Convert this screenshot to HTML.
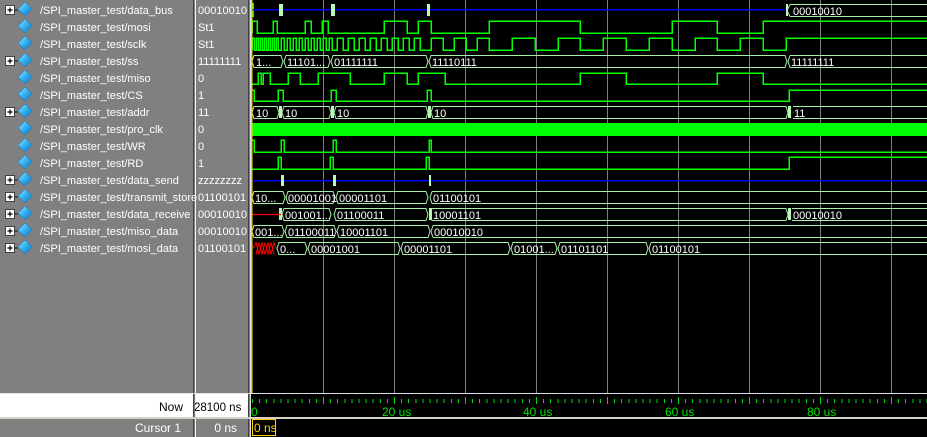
<!DOCTYPE html>
<html><head><meta charset="utf-8"><style>
html,body{margin:0;padding:0;width:927px;height:437px;overflow:hidden;background:#808080;font-family:"Liberation Sans",sans-serif;}
svg{position:absolute;left:0;top:0}
</style></head><body>
<svg width="927" height="437" viewBox="0 0 927 437" xmlns="http://www.w3.org/2000/svg" font-family="Liberation Sans, sans-serif">
<defs>
<linearGradient id="dg" x1="0" y1="0" x2="1" y2="1"><stop offset="0" stop-color="#a8e8ff"/><stop offset="0.5" stop-color="#30b0f0"/><stop offset="1" stop-color="#1070c0"/></linearGradient>
<g id="dia"><polygon points="25,0 32,7 25,14 18,7" fill="url(#dg)" stroke="#2080c0" stroke-width="0.6"/></g>
<g id="plus"><rect x="5.5" y="3.5" width="9" height="9" fill="#fff" stroke="#404040"/><path d="M7.5 8H12.5M10 5.5V10.5" stroke="#000" stroke-width="1.2"/><path d="M14 8H18" stroke="#202020"/></g>
</defs>
<rect x="0" y="0" width="927" height="437" fill="#808080"/>
<rect x="193" y="0" width="1" height="437" fill="#404040"/>
<rect x="195" y="0" width="1" height="437" fill="#f0f0f0"/>
<rect x="248" y="0" width="1" height="437" fill="#404040"/>
<rect x="250" y="0" width="1" height="437" fill="#e0e0e0"/>
<rect x="251" y="0" width="676" height="437" fill="#000"/>
<g fill="#fff" font-size="11">
<g transform="translate(0,2)"><use href="#plus"/><use href="#dia"/></g><text x="40" y="14">/SPI_master_test/data_bus</text><text x="198" y="14">00010010</text>
<g transform="translate(0,19)"><use href="#dia"/></g><text x="40" y="31">/SPI_master_test/mosi</text><text x="198" y="31">St1</text>
<g transform="translate(0,36)"><use href="#dia"/></g><text x="40" y="48">/SPI_master_test/sclk</text><text x="198" y="48">St1</text>
<g transform="translate(0,53)"><use href="#plus"/><use href="#dia"/></g><text x="40" y="65">/SPI_master_test/ss</text><text x="198" y="65">11111111</text>
<g transform="translate(0,70)"><use href="#dia"/></g><text x="40" y="82">/SPI_master_test/miso</text><text x="198" y="82">0</text>
<g transform="translate(0,87)"><use href="#dia"/></g><text x="40" y="99">/SPI_master_test/CS</text><text x="198" y="99">1</text>
<g transform="translate(0,104)"><use href="#plus"/><use href="#dia"/></g><text x="40" y="116">/SPI_master_test/addr</text><text x="198" y="116">11</text>
<g transform="translate(0,121)"><use href="#dia"/></g><text x="40" y="133">/SPI_master_test/pro_clk</text><text x="198" y="133">0</text>
<g transform="translate(0,138)"><use href="#dia"/></g><text x="40" y="150">/SPI_master_test/WR</text><text x="198" y="150">0</text>
<g transform="translate(0,155)"><use href="#dia"/></g><text x="40" y="167">/SPI_master_test/RD</text><text x="198" y="167">1</text>
<g transform="translate(0,172)"><use href="#plus"/><use href="#dia"/></g><text x="40" y="184">/SPI_master_test/data_send</text><text x="198" y="184">zzzzzzzz</text>
<g transform="translate(0,189)"><use href="#plus"/><use href="#dia"/></g><text x="40" y="201">/SPI_master_test/transmit_store</text><text x="198" y="201">01100101</text>
<g transform="translate(0,206)"><use href="#plus"/><use href="#dia"/></g><text x="40" y="218">/SPI_master_test/data_receive</text><text x="198" y="218">00010010</text>
<g transform="translate(0,223)"><use href="#plus"/><use href="#dia"/></g><text x="40" y="235">/SPI_master_test/miso_data</text><text x="198" y="235">00010010</text>
<g transform="translate(0,240)"><use href="#plus"/><use href="#dia"/></g><text x="40" y="252">/SPI_master_test/mosi_data</text><text x="198" y="252">01100101</text>
</g>
<g stroke="#808080" stroke-width="1">
<path d="M323.5 0V393M394.5 0V393M465.5 0V393M536.5 0V393M607.5 0V393M678.5 0V393M749.5 0V393M820.5 0V393M891.5 0V393"/>
</g>
<g fill="none" stroke="#00ff00" stroke-width="1.5" shape-rendering="crispEdges">
<path d="M252 33V21H257V33H273V21H277V33H305V21H311V33H322V21H328V33H384V21H407V33H418V21H431V33H489V21H580V33H672V21H717V33H763V21H927"/>
<path d="M252 50V38H254V50H256V38H258V50H260V38H262V50H264V38H266V50H268V38H270V50H272V38H274V50H276V38H278V50H281V38H284V50H287V38H290V50H293V38H296V50H299V38H302V50H305V38H308V50H311V38H314V50H317V38H320V50H323V38H326V50H329V38H332V50H337V38H343V50H348V38H354V50H359V38H365V50H370V38H376V50H381V38H387V50H392V38H398V50H403V38H409V50H414V38H420V50H431V38H443V50H454V38H466V50H477V38H489V50H512V38H535V50H558V38H580V50H603V38H626V50H649V38H672V50H695V38H717V50H740V38H763V50H786V38H927"/>
<path d="M252 84H258V73H261V84H263V73H270V84H288V73H300V84H318V73H350V84H384V73H407V84H418V73H445V84H580V73H626V84H717V73H763V84H927"/>
<path d="M252 90H254V101H278V90H283V101H331V90H336V101H427V90H431V101H789V90H927"/>
<path d="M252 140H254V152H281V140H284V152H333V140H336V152H429V140H431V152H927"/>
<path d="M252 169H278V157H281V169H330V157H333V169H426V157H429V169H789V157H927"/>
</g>
<rect x="252" y="123" width="675" height="13" fill="#00ff00"/>
<rect x="252" y="3" width="2" height="14" fill="#00ff00"/>
<path d="M252 9.5H787M252 180.5H927" stroke="#0000ff" stroke-width="1.5" shape-rendering="crispEdges"/>
<g fill="#b8f8b8">
<rect x="279" y="4" width="4" height="12"/><rect x="331" y="4" width="4" height="12"/><rect x="427" y="4" width="3" height="12"/><rect x="786" y="4" width="2" height="12"/>
<rect x="281" y="175" width="3" height="11"/><rect x="333" y="175" width="3" height="11"/><rect x="429" y="175" width="2" height="11"/>
<rect x="279" y="106" width="3" height="12"/><rect x="331" y="106" width="3" height="12"/><rect x="428" y="106" width="3" height="12"/><rect x="788" y="106" width="3" height="12"/>
<rect x="429" y="208" width="3" height="12"/><rect x="788" y="208" width="3" height="12"/><rect x="279" y="208" width="3" height="12"/>
</g>
<g fill="none" stroke="#a8f0a8" stroke-width="1">
<path d="M790 4.5H927M790 16.5H927M787 10.5L790 4.5M787 10.5L790 16.5"/>
<path d="M254 55.5H281L283 61.5L281 67.5H254L252 61.5Z M286 55.5H328L330 61.5L328 67.5H286L284 61.5Z M333 55.5H426L428 61.5L426 67.5H333L331 61.5Z M431 55.5H785L787 61.5L785 67.5H431L429 61.5Z M790 55.5H930M790 67.5H930M788 61.5L790 55.5M788 61.5L790 67.5"/>
<path d="M254 106.5H277L279 112.5L277 118.5H254L252 112.5Z M284 106.5H329L331 112.5L329 118.5H284L282 112.5Z M336 106.5H426L428 112.5L426 118.5H336L334 112.5Z M433 106.5H786L788 112.5L786 118.5H433L431 112.5Z M793 106.5H930M793 118.5H930"/>
<path d="M254 191.5H283L285 197.5L283 203.5H254L252 197.5Z M288 191.5H333L335 197.5L333 203.5H288L286 197.5Z M338 191.5H426L428 197.5L426 203.5H338L336 197.5Z M432 191.5H930M432 203.5H930M430 197.5L432 191.5M430 197.5L432 203.5"/>
<path d="M284 208.5H329L331 214.5L329 220.5H284L282 214.5Z M336 208.5H426L428 214.5L426 220.5H336L334 214.5Z M432 208.5H786L788 214.5L786 220.5H432L430 214.5Z M792 208.5H930M792 220.5H930"/>
<path d="M254 225.5H282L284 231.5L282 237.5H254L252 231.5Z M287 225.5H334L336 231.5L334 237.5H287L285 231.5Z M339 225.5H428L430 231.5L428 237.5H339L337 231.5Z M433 225.5H930M433 237.5H930M431 231.5L433 225.5M431 231.5L433 237.5"/>
<path d="M279 242.5H305L307 248.5L305 254.5H279L277 248.5Z M310 242.5H398L400 248.5L398 254.5H310L308 248.5Z M403 242.5H508L510 248.5L508 254.5H403L401 248.5Z M513 242.5H555L557 248.5L555 254.5H513L511 248.5Z M560 242.5H646L648 248.5L646 254.5H560L558 248.5Z M651 242.5H930M651 254.5H930M649 248.5L651 242.5M649 248.5L651 254.5"/>
</g>
<path d="M252 214.5H281" stroke="#ff0000" stroke-width="1.2"/>
<path d="M253 248.5L256 242.5L259 254.5L262 242.5L265 254.5L268 242.5L271 254.5L274 242.5L276 248.5M256 254.5L259 242.5L262 254.5L265 242.5L268 254.5L271 242.5L274 254.5" fill="none" stroke="#ff0000" stroke-width="1"/>
<g fill="#ffffff" font-size="11">
<text x="793" y="15">00010010</text>
<text x="256" y="66">1...</text><text x="287" y="66">11101...</text><text x="334" y="66">01111111</text><text x="432" y="66">11110111</text><text x="791" y="66">11111111</text>
<text x="256" y="117">10</text><text x="285" y="117">10</text><text x="337" y="117">10</text><text x="434" y="117">10</text><text x="794" y="117">11</text>
<text x="255" y="202">10...</text><text x="288" y="202">00001001</text><text x="339" y="202">00001101</text><text x="433" y="202">01100101</text>
<text x="285" y="219">001001...</text><text x="337" y="219">01100011</text><text x="433" y="219">10001101</text><text x="793" y="219">00010010</text>
<text x="255" y="236">001...</text><text x="288" y="236">01100011</text><text x="340" y="236">10001101</text><text x="434" y="236">00010010</text>
<text x="280" y="253">0...</text><text x="311" y="253">00001001</text><text x="404" y="253">00001101</text><text x="514" y="253">01001...</text><text x="561" y="253">01101101</text><text x="652" y="253">01100101</text>
</g>
<rect x="251" y="0" width="1.5" height="394" fill="#ffd000"/>
<rect x="0" y="393" width="927" height="1" fill="#e0e0e0"/>
<rect x="0" y="394" width="193" height="23" fill="#fff"/>
<rect x="196" y="394" width="52" height="23" fill="#fff"/>
<rect x="0" y="417" width="927" height="2" fill="#d4d0c8"/>
<rect x="251" y="395" width="676" height="22" fill="#000"/>
<rect x="251" y="419" width="676" height="18" fill="#000"/>
<rect x="250" y="394" width="1" height="43" fill="#e0e0e0"/>
<g font-size="12">
<text x="183" y="411" text-anchor="end" fill="#000">Now</text>
<text x="194" y="411" fill="#000" font-size="11.5">28100 ns</text>
<text x="181" y="432" text-anchor="end" fill="#fff">Cursor 1</text>
<text x="237" y="432" text-anchor="end" fill="#fff">0 ns</text>
</g>
<path d="M252 401H927" stroke="#00e000" stroke-width="4" stroke-dasharray="1 6.1" shape-rendering="crispEdges"/>
<path d="M323.5 397V404M394.5 397V404M465.5 397V404M536.5 397V404M607.5 397V404M678.5 397V404M749.5 397V404M820.5 397V404M891.5 397V404" stroke="#00e000"/>
<g fill="#00e000" font-size="12">
<text x="251" y="416">0</text>
<text x="382" y="416">20 us</text><text x="523" y="416">40 us</text><text x="665" y="416">60 us</text><text x="807" y="416">80 us</text>
</g>
<rect x="252.5" y="419.5" width="23" height="16" fill="none" stroke="#ffd000"/>
<text x="254" y="432" fill="#ffd000" font-size="12">0 ns</text>
</svg>
</body></html>
